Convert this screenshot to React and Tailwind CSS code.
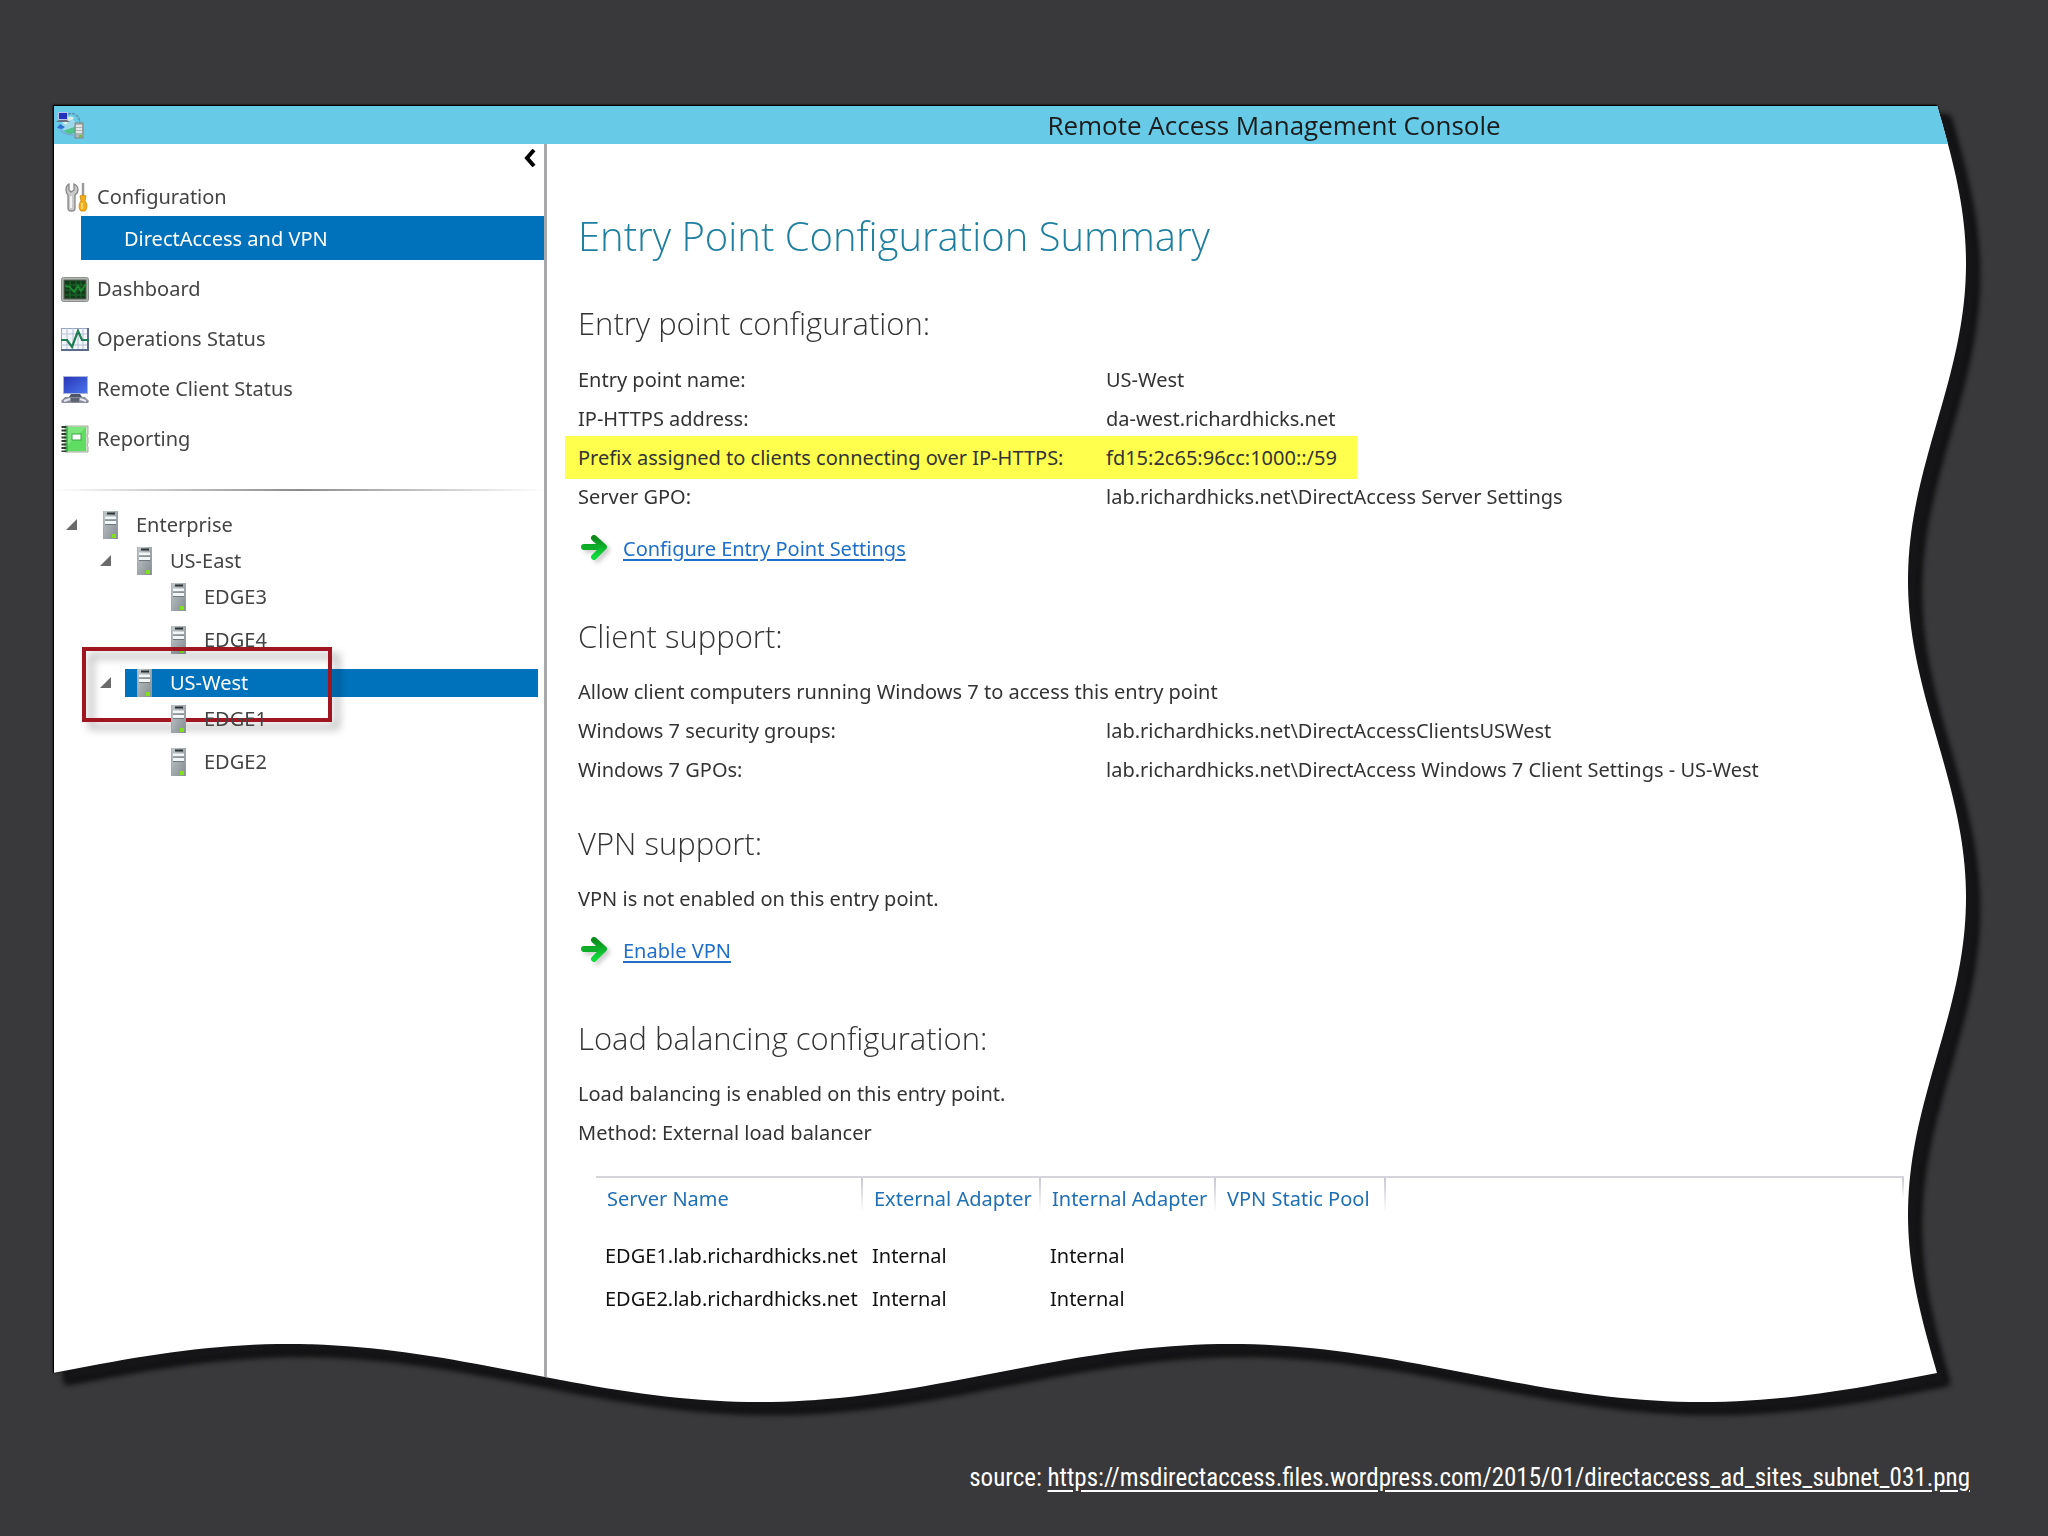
const WAVE = 29;
const STEPS = 160;

// Outline of the torn page: straight top and left, two full waves on the right and on the bottom
function tornEdge() {
  const points = ['0 0'];
  for (let i = 0; i <= STEPS; i++) {
    const t = i / STEPS;
    const offset = WAVE * (1 - Math.sin(4 * Math.PI * t));
    points.push(`calc(100% - ${offset.toFixed(2)}px) calc((100% - ${WAVE}px) * ${t})`);
  }
  for (let i = STEPS; i >= 0; i--) {
    const t = i / STEPS;
    const offset = WAVE * (1 + Math.sin(4 * Math.PI * t));
    points.push(`calc((100% - ${WAVE}px) * ${t}) calc(100% - ${offset.toFixed(2)}px)`);
  }
  return `polygon(${points.join(', ')})`;
}

const TORN_EDGE = tornEdge();

function AppIcon() {
  return (
    <svg width="28" height="30" viewBox="0 0 28 30" aria-hidden="true">
      <path d="M12 4c7-2 12 3 12 9" fill="none" stroke="#5d93ad" strokeWidth="1.5" strokeDasharray="3 1" />
      <circle cx="13" cy="15" r="7" fill="#9bd9ea" />
      <path d="M7 12c2-5 8-7 11-4-2 3-5 1-6 4s-4 3-5 0z" fill="#d8f0e4" />
      <path d="M8 21c4-3 8-2 11-5v6c-3 3-8 3-11-1z" fill="#4fc48c" />
      <path d="M3 16c1 6 6 9 14 9" fill="none" stroke="#7aa9d8" strokeWidth="1.5" />
      <path d="M1 18l3-4 5 3-3 2z" fill="#2f6fd0" />
      <rect x="2" y="2" width="10" height="8" fill="#b9c6ea" />
      <rect x="3" y="3" width="8" height="6" fill="#2433bb" />
      <path d="M0 12l3-2h8l3 2z" fill="#6c7280" />
      <rect x="19" y="13" width="8" height="15" fill="#aeb6b4" stroke="#7d8684" />
      <path d="M20 16h6M20 19h6M20 22h6" stroke="#f4f6f6" strokeWidth="1.5" />
      <rect x="23" y="25" width="3" height="2" fill="#67c22b" />
    </svg>
  );
}

function ToolsIcon() {
  return (
    <svg width="28" height="30" viewBox="0 0 28 30" aria-hidden="true">
      <path
        d="M8 2v6l2 2 3-2V2c3 1 4 4 4 6 0 3-2 4-3 5v13c0 4-7 4-7 0V13C6 12 5 10 5 8c0-3 1-5 3-6z"
        fill="#c9c9c9"
        stroke="#858585"
        strokeWidth="1.3"
      />
      <path d="M10 14v12" stroke="#f2f2f2" strokeWidth="2" />
      <path d="M22 1v13" stroke="#9a9a9a" strokeWidth="2.5" />
      <path d="M19 14c1-1 5-1 6 0l-1 5c3 3 2 9 0 10h-4c-2-1-3-7 0-10z" fill="#f2ae14" stroke="#c98508" strokeWidth="0.8" />
      <path d="M21 21v6" stroke="#ffe28a" strokeWidth="1.5" />
    </svg>
  );
}

function DashboardIcon() {
  return (
    <svg width="28" height="25" viewBox="0 0 28 25" aria-hidden="true">
      <rect x="0.5" y="0.5" width="27" height="24" rx="2" fill="#b4b8b4" stroke="#8d918d" />
      <rect x="3" y="3" width="22" height="19" fill="#123a1b" stroke="#5f665f" />
      <path d="M4 8h20M4 13h20M4 18h20M9 4v17M15 4v17M20 4v17" stroke="#1c6b2c" />
      <path d="M4 9l5 1 4 5 4-6 3 5 5-7" fill="none" stroke="#1f8a33" strokeWidth="1.8" />
    </svg>
  );
}

function OperationsIcon() {
  return (
    <svg width="28" height="23" viewBox="0 0 28 23" aria-hidden="true">
      <rect x="0.5" y="0.5" width="27" height="22" fill="#f3f6fb" stroke="#98a3bd" />
      <path d="M0 6h28M0 17h28M6 0v23M12 0v23M17 0v23M22 0v23" stroke="#b7c0d6" />
      <path d="M27 0v22H0" fill="none" stroke="#5c6a8c" strokeWidth="2" />
      <path d="M0 12h6l5 7 6-16 4 9h7" fill="none" stroke="#1f7d53" strokeWidth="2.2" />
    </svg>
  );
}

function ClientIcon() {
  return (
    <svg width="28" height="27" viewBox="0 0 28 27" aria-hidden="true">
      <defs>
        <linearGradient id="screen" x1="0" y1="0" x2="1" y2="1">
          <stop offset="0" stopColor="#2a37b8" />
          <stop offset="1" stopColor="#4a74ec" />
        </linearGradient>
      </defs>
      <rect x="2" y="0" width="25" height="18" fill="#a9b4dc" />
      <rect x="3" y="1" width="23" height="16" fill="url(#screen)" />
      <path d="M10 18h9l2 3H8z" fill="#4f5466" />
      <path d="M4 21h20l4 4-1 2H1l-1-2z" fill="#8b8f9b" />
      <path d="M3 25l6-2M25 25l-6-2" stroke="#e6e8ee" strokeWidth="2" />
      <path d="M10 22h8v4h-8z" fill="#5f6473" />
    </svg>
  );
}

function ReportIcon() {
  return (
    <svg width="28" height="28" viewBox="0 0 28 28" aria-hidden="true">
      <path d="M4 1h23v8l-1 2 1 2v5l-1 2 1 2v5H4z" fill="#cfdccb" stroke="#9fb09a" />
      <rect x="5" y="2" width="20" height="24" fill="#5fdc62" />
      <path d="M5 2h20L5 22z" fill="#7be67b" />
      <rect x="11" y="9" width="9" height="6" fill="#fff" stroke="#3aa845" />
      <path d="M3 1v26" stroke="#2f3b30" strokeWidth="5" strokeDasharray="2 1.5" />
      <path d="M6 1v26" stroke="#2b8f38" />
    </svg>
  );
}

function ServerIcon() {
  return (
    <svg width="15" height="28" viewBox="0 0 15 28" aria-hidden="true" className="shrink-0">
      <defs>
        <linearGradient id="tower" x1="0" y1="0" x2="1" y2="1">
          <stop offset="0" stopColor="#c3cacc" />
          <stop offset="1" stopColor="#838b91" />
        </linearGradient>
      </defs>
      <rect width="15" height="28" fill="url(#tower)" />
      <path d="M0 0v28M15 0v28" stroke="#9aa2a6" />
      <path d="M4 2.5h8" stroke="#2d3335" strokeWidth="2" />
      <path d="M2 7h11M2 11.5h11" stroke="#f3f6f7" strokeWidth="3" />
      <path d="M2 9h11M2 13.5h11" stroke="#6f787d" />
      <rect x="9" y="23" width="4" height="4" fill="#7fe01c" />
    </svg>
  );
}

function ArrowIcon() {
  return (
    <svg
      width="28"
      height="28"
      viewBox="0 0 28 28"
      aria-hidden="true"
      className="mt-[5px] shrink-0 drop-shadow-[3px_3px_2px_rgba(0,0,0,0.2)]"
    >
      <defs>
        <linearGradient id="go" x1="0" y1="0" x2="0" y2="1">
          <stop offset="0" stopColor="#0c8a1c" />
          <stop offset="1" stopColor="#10dd3c" />
        </linearGradient>
      </defs>
      <path
        d="M3 13h15M13 4l10 9-10 10"
        fill="none"
        stroke="url(#go)"
        strokeWidth="6"
        strokeLinecap="round"
        strokeLinejoin="round"
      />
      <path d="M2 11h15v5H2z" fill="#0fae2a" />
    </svg>
  );
}

const navItems = [
  { label: 'Dashboard', icon: DashboardIcon },
  { label: 'Operations Status', icon: OperationsIcon },
  { label: 'Remote Client Status', icon: ClientIcon },
  { label: 'Reporting', icon: ReportIcon },
];

const tree = {
  label: 'Enterprise',
  children: [
    { label: 'US-East', children: [{ label: 'EDGE3' }, { label: 'EDGE4' }] },
    { label: 'US-West', selected: true, children: [{ label: 'EDGE1' }, { label: 'EDGE2' }] },
  ],
};

const servers = [
  { name: 'EDGE1.lab.richardhicks.net', external: 'Internal', internal: 'Internal' },
  { name: 'EDGE2.lab.richardhicks.net', external: 'Internal', internal: 'Internal' },
];

function TreeNode({ node }) {
  return (
    <li>
      <div className={`relative flex h-9 items-center ${node.children ? '' : 'mb-[7px]'}`}>
        {node.children ? (
          <button aria-label={`Collapse ${node.label}`} className="w-3">
            <svg width="12" height="12" viewBox="0 0 12 12" aria-hidden="true">
              <path d="M11 0v11H0z" fill="#6a6a6a" />
            </svg>
          </button>
        ) : (
          <span className="w-3" />
        )}
        <a
          href="#"
          className={`mr-[6px] ml-[13px] flex h-7 flex-1 items-center gap-[18px] pl-3 ${
            node.selected ? 'bg-[#0072bc] text-white' : ''
          }`}
        >
          <ServerIcon />
          {node.label}
        </a>
        {/* red callout round the selected entry point */}
        {node.selected && (
          <span className="pointer-events-none absolute -top-[18px] -left-[18px] h-[75px] w-[250px] border-4 border-[#a01620] drop-shadow-[7px_7px_4px_rgba(0,0,0,0.35)]" />
        )}
      </div>
      {node.children && (
        <ul className="pl-[34px]">
          {node.children.map((child) => (
            <TreeNode key={child.label} node={child} />
          ))}
        </ul>
      )}
    </li>
  );
}

function Sidebar() {
  return (
    <aside className="w-[493px] shrink-0 border-r-[3px] border-[#a9a9ab] text-[#444]">
      <div className="flex h-7 items-center justify-end pr-2">
        <button aria-label="Collapse pane">
          <svg width="12" height="18" viewBox="0 0 12 18" aria-hidden="true">
            <path d="M10 1L3 9l7 8" fill="none" stroke="#000" strokeWidth="4" />
          </svg>
        </button>
      </div>
      <nav>
        <a href="#" className="mt-[6px] flex h-[38px] items-center gap-2 pl-[7px]">
          <ToolsIcon />
          Configuration
        </a>
        <a href="#" className="mb-1 ml-[27px] flex h-11 items-center bg-[#0072bc] pt-[2px] pl-[43px] text-white">
          DirectAccess and VPN
        </a>
        {navItems.map(({ label, icon: Icon }) => (
          <a key={label} href="#" className="flex h-[50px] items-center gap-2 pl-[7px]">
            <Icon />
            {label}
          </a>
        ))}
      </nav>
      <div className="mt-[25px] h-[2px] bg-linear-to-r from-white via-[#8c8c8c] to-white" />
      <ul className="mt-4 pl-3">
        <TreeNode node={tree} />
      </ul>
    </aside>
  );
}

function Heading({ children, className = '' }) {
  return (
    <h2 className={`mb-4 font-['Open_Sans',sans-serif] text-[31px] leading-10 font-light text-[#333] ${className}`}>
      {children}
    </h2>
  );
}

function Field({ label, value, marked }) {
  return (
    <div className="relative flex">
      {marked && <span className="absolute -top-[2px] -left-[13px] h-[43px] w-[792px] bg-[#ffff4d]" />}
      <dt className="relative w-[528px] shrink-0">{label}</dt>
      <dd className="relative">{value}</dd>
    </div>
  );
}

function ActionLink({ children }) {
  return (
    <div className="mt-[13px] flex items-start gap-[14px] pl-[3px]">
      <ArrowIcon />
      <a href="#" className="text-[#1f6fc9] underline underline-offset-3">
        {children}
      </a>
    </div>
  );
}

function HeaderCell({ children, className = '' }) {
  return (
    <th
      scope="col"
      className={`bg-[linear-gradient(#c9c7cf,#ffffff)] bg-[length:2px_34px] bg-right-top bg-no-repeat pb-[14px] pl-[11px] text-left leading-[42px] font-normal ${className}`}
    >
      {children}
    </th>
  );
}

function Summary() {
  return (
    <main className="min-w-0 flex-1 pt-[68px] pr-[62px] pb-[82px] pl-[31px] leading-[39px] text-[#333]">
      <h1 className="mb-[43px] font-['Open_Sans',sans-serif] text-[40px] leading-[48px] font-light text-[#1f7f9f]">
        Entry Point Configuration Summary
      </h1>

      <Heading>Entry point configuration:</Heading>
      <dl className="pt-px">
        <Field label="Entry point name:" value="US-West" />
        <Field label="IP-HTTPS address:" value="da-west.richardhicks.net" />
        <Field label="Prefix assigned to clients connecting over IP-HTTPS:" value="fd15:2c65:96cc:1000::/59" marked />
        <Field label="Server GPO:" value="lab.richardhicks.net\DirectAccess Server Settings" />
      </dl>
      <ActionLink>Configure Entry Point Settings</ActionLink>

      <Heading className="mt-12">Client support:</Heading>
      <p>Allow client computers running Windows 7 to access this entry point</p>
      <dl>
        <Field label="Windows 7 security groups:" value="lab.richardhicks.net\DirectAccessClientsUSWest" />
        <Field label="Windows 7 GPOs:" value="lab.richardhicks.net\DirectAccess Windows 7 Client Settings - US-West" />
      </dl>

      <Heading className="mt-[34px]">VPN support:</Heading>
      <p>VPN is not enabled on this entry point.</p>
      <ActionLink>Enable VPN</ActionLink>

      <Heading className="mt-12">Load balancing configuration:</Heading>
      <p>Load balancing is enabled on this entry point.</p>
      <p>Method: External load balancer</p>

      <div className="mt-6 ml-[18px] border-t-2 border-[#d6d4da]">
        <table className="w-full table-fixed">
          <thead className="text-[#1f6fb5]">
            <tr>
              <HeaderCell className="w-[267px]">Server Name</HeaderCell>
              <HeaderCell className="w-[178px]">External Adapter</HeaderCell>
              <HeaderCell className="w-[175px]">Internal Adapter</HeaderCell>
              <HeaderCell className="w-[170px]">VPN Static Pool</HeaderCell>
              <td className="bg-[linear-gradient(#c9c7cf,#ffffff)] bg-[length:2px_20px] bg-right-top bg-no-repeat" />
            </tr>
          </thead>
          <tbody className="leading-[43px] text-[#111]">
            {servers.map((server) => (
              <tr key={server.name}>
                <td className="pl-[9px]">{server.name}</td>
                <td className="pl-[9px]">{server.external}</td>
                <td className="pl-[9px]">{server.internal}</td>
                <td />
                <td />
              </tr>
            ))}
          </tbody>
        </table>
      </div>
    </main>
  );
}

export default function App() {
  return (
    <div className="min-h-screen bg-[#39383a] pt-[105px] pr-[78px] pl-[53px] font-['Noto_Sans',sans-serif] text-[20px]">
      <div className="mr-1 drop-shadow-[0_0_1px_#000]">
        <div className="drop-shadow-[12px_11px_3px_#151416]">
          <div className="border-t border-l border-black bg-white" style={{ clipPath: TORN_EDGE }}>
            <header className="flex h-[38px] items-center bg-[#67cbe8] pl-[2px] font-['Open_Sans',sans-serif] text-[26px] text-[#1b1b1b]">
              <AppIcon />
              <span className="flex-1 pl-[498px] text-center">Remote Access Management Console</span>
            </header>
            <div className="flex">
              <Sidebar />
              <Summary />
            </div>
          </div>
        </div>
      </div>
      <footer className="mt-[56px] text-right font-['Roboto_Condensed','Roboto',sans-serif] text-[25px] leading-10 text-white">
        source:{' '}
        <a href="#" className="underline underline-offset-4">
          https://msdirectaccess.files.wordpress.com/2015/01/directaccess_ad_sites_subnet_031.png
        </a>
      </footer>
    </div>
  );
}
